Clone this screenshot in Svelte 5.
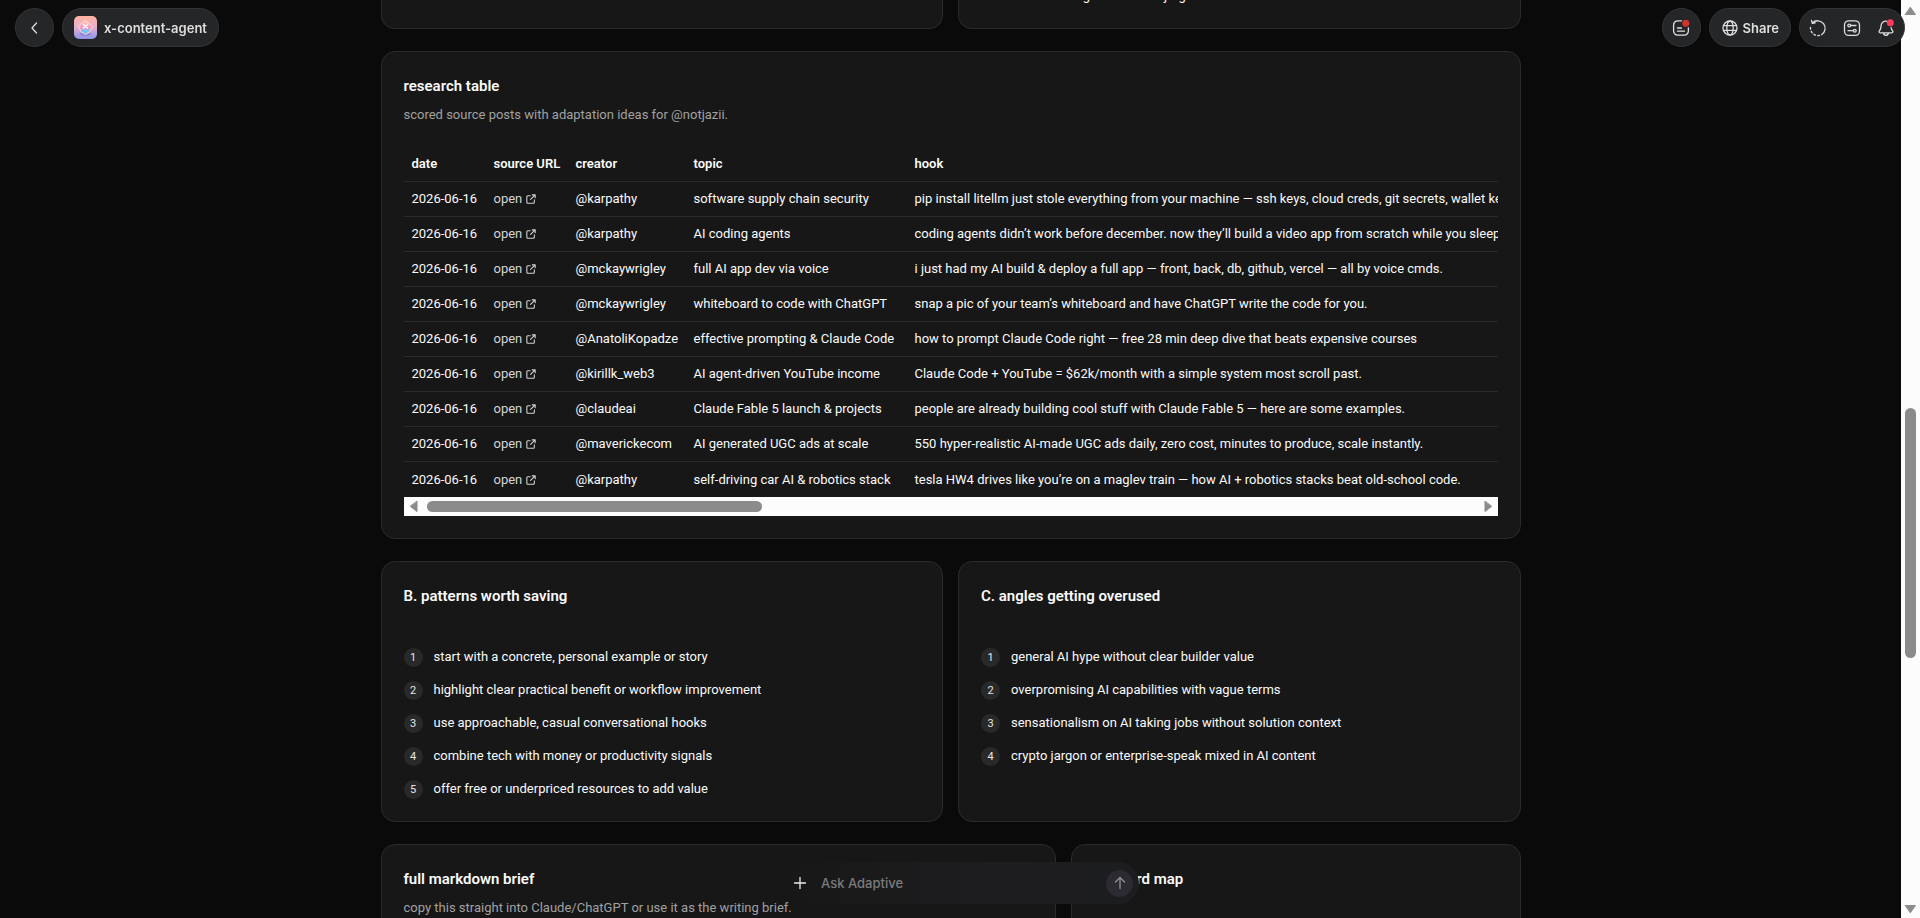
<script lang="ts">
   type Post = { creator: string; topic: string; hook: string };

   const date = "2026-06-16";
   const columns = ["date", "source URL", "creator", "topic", "hook"];

   const posts: Post[] = [
      {
         creator: "@karpathy",
         topic: "software supply chain security",
         hook: "pip install litellm just stole everything from your machine — ssh keys, cloud creds, git secrets, wallet keys.",
      },
      {
         creator: "@karpathy",
         topic: "AI coding agents",
         hook: "coding agents didn’t work before december. now they’ll build a video app from scratch while you sleep.",
      },
      {
         creator: "@mckaywrigley",
         topic: "full AI app dev via voice",
         hook: "i just had my AI build & deploy a full app — front, back, db, github, vercel — all by voice cmds.",
      },
      {
         creator: "@mckaywrigley",
         topic: "whiteboard to code with ChatGPT",
         hook: "snap a pic of your team’s whiteboard and have ChatGPT write the code for you.",
      },
      {
         creator: "@AnatoliKopadze",
         topic: "effective prompting & Claude Code",
         hook: "how to prompt Claude Code right — free 28 min deep dive that beats expensive courses",
      },
      {
         creator: "@kirillk_web3",
         topic: "AI agent-driven YouTube income",
         hook: "Claude Code + YouTube = $62k/month with a simple system most scroll past.",
      },
      {
         creator: "@claudeai",
         topic: "Claude Fable 5 launch & projects",
         hook: "people are already building cool stuff with Claude Fable 5 — here are some examples.",
      },
      {
         creator: "@maverickecom",
         topic: "AI generated UGC ads at scale",
         hook: "550 hyper-realistic AI-made UGC ads daily, zero cost, minutes to produce, scale instantly.",
      },
      {
         creator: "@karpathy",
         topic: "self-driving car AI & robotics stack",
         hook: "tesla HW4 drives like you’re on a maglev train — how AI + robotics stacks beat old-school code.",
      },
   ];

   const lists = [
      {
         title: "B. patterns worth saving",
         items: [
            "start with a concrete, personal example or story",
            "highlight clear practical benefit or workflow improvement",
            "use approachable, casual conversational hooks",
            "combine tech with money or productivity signals",
            "offer free or underpriced resources to add value",
         ],
      },
      {
         title: "C. angles getting overused",
         items: [
            "general AI hype without clear builder value",
            "overpromising AI capabilities with vague terms",
            "sensationalism on AI taking jobs without solution context",
            "crypto jargon or enterprise-speak mixed in AI content",
         ],
      },
   ];

   // share of the track before, under and after the thumb
   const pageBar = [441, 284, 275];
   const tableBar = [0, 32, 68];

   let message = "";
</script>

<div class="shell">
   <main>
      <div class="content">
         <div class="row halves">
            <section class="card tail"><div class="clip"></div></section>
            <section class="card tail">
               <div class="clip"><p>more building and far less jargon</p></div>
            </section>
         </div>

         <section class="card">
            <h2>research table</h2>
            <p class="sub">scored source posts with adaptation ideas for @notjazii.</p>
            <div class="scroller">
               <table>
                  <colgroup>
                     <col class="c-date" />
                     <col class="c-source" />
                     <col class="c-creator" />
                     <col class="c-topic" />
                     <col />
                  </colgroup>
                  <thead>
                     <tr>
                        {#each columns as column}
                           <th scope="col">{column}</th>
                        {/each}
                     </tr>
                  </thead>
                  <tbody>
                     {#each posts as post}
                        <tr>
                           <td>{date}</td>
                           <td>
                              <a href="#source">
                                 open
                                 <svg viewBox="0 0 12 12" width="10" height="10" aria-hidden="true">
                                    <path d="M7.5 1H11v3.5M11 1 5.5 6.5M5 2H2.2A1.2 1.2 0 0 0 1 3.2v6.6A1.2 1.2 0 0 0 2.200 11h6.600A1.2 1.2 0 0 0 10 9.800V7" />
                                 </svg>
                              </a>
                           </td>
                           <td>{post.creator}</td>
                           <td>{post.topic}</td>
                           <td>{post.hook}</td>
                        </tr>
                     {/each}
                  </tbody>
               </table>
            </div>
            <div class="bar horizontal">
               <svg viewBox="0 0 10 12" width="10" height="13"><path d="M8 1v10L1.500 6z" /></svg>
               <div class="track">
                  <span style="flex-grow: {tableBar[0]}"></span>
                  <span class="thumb" style="flex-grow: {tableBar[1]}"></span>
                  <span style="flex-grow: {tableBar[2]}"></span>
               </div>
               <svg viewBox="0 0 10 12" width="10" height="13"><path d="M2 1v10L8.500 6z" /></svg>
            </div>
         </section>

         <div class="row halves">
            {#each lists as list}
               <section class="card">
                  <h2>{list.title}</h2>
                  <ol>
                     {#each list.items as item, i}
                        <li><span class="num">{i + 1}</span>{item}</li>
                     {/each}
                  </ol>
               </section>
            {/each}
         </div>

         <div class="row wide-left">
            <section class="card last">
               <h2>full markdown brief</h2>
               <p class="sub">copy this straight into Claude/ChatGPT or use it as the writing brief.</p>
            </section>
            <section class="card last">
               <h2>keyword map</h2>
            </section>
         </div>
      </div>
   </main>

   <div class="bar vertical">
      <svg viewBox="0 0 12 10" width="13" height="10"><path d="M1 8.500h10L6 1.500z" /></svg>
      <div class="track">
         <span style="flex-grow: {pageBar[0]}"></span>
         <span class="thumb" style="flex-grow: {pageBar[1]}"></span>
         <span style="flex-grow: {pageBar[2]}"></span>
      </div>
      <svg viewBox="0 0 12 10" width="13" height="10"><path d="M1 1.500h10L6 8.500z" /></svg>
   </div>
</div>

<header>
   <div class="group">
      <button class="chip round" aria-label="Back">
         <svg viewBox="0 0 20 20" width="20" height="20"><path d="M11.500 5 7 10l4.500 5" /></svg>
      </button>
      <button class="chip project">
         <svg class="logo" viewBox="0 0 23 23" width="23" height="23" aria-hidden="true">
            <defs>
               <linearGradient id="sky" x1="0" y1="0" x2="0" y2="1">
                  <stop offset="0" stop-color="#ffb3a0" />
                  <stop offset="0.5" stop-color="#e5b0cf" />
                  <stop offset="1" stop-color="#8f96ea" />
               </linearGradient>
               <linearGradient id="gem" x1="0" y1="0" x2="0" y2="1">
                  <stop offset="0" stop-color="#ffc9b0" />
                  <stop offset="0.500" stop-color="#f79ac4" />
                  <stop offset="1" stop-color="#5fc4ff" />
               </linearGradient>
            </defs>
            <rect width="23" height="23" rx="5" fill="url(#sky)" />
            <ellipse cx="11.500" cy="18" rx="6" ry="2" fill="#7d78dc" opacity="0.6" />
            <path d="M11.500 4.500 18.500 10.500 16 15.500 11.500 18.500 7 15.500 4.500 10.500z" fill="url(#gem)" stroke="#ffdccb" stroke-width="1" stroke-linejoin="round" />
            <path d="M8 12.500q3.500 3.500 7 0l-1 3-2.500 2-2.500-2z" fill="#63cdfb" />
            <path d="M9.500 8.500l4 3.500M13.500 8.500l-4 3.500" stroke="#fff" stroke-width="1.500" stroke-linecap="round" />
         </svg>
         x-content-agent
      </button>
   </div>

   <div class="group">
      <button class="chip round" aria-label="Updates">
         <svg viewBox="0 0 20 20" width="20" height="20">
            <path d="M10.500 2.800H6.800A4.200 4.200 0 0 0 2.600 7v6a4.200 4.200 0 0 0 4.200 4.200h6.400a4.200 4.200 0 0 0 4.200-4.200V10M6.500 10h4M6.500 13.200h7" />
            <circle class="dot red" cx="14.800" cy="5.200" r="3.500" />
         </svg>
      </button>
      <button class="chip share">
         <svg viewBox="0 0 18 18" width="18" height="18" aria-hidden="true">
            <circle cx="9" cy="9" r="7" />
            <ellipse cx="9" cy="9" rx="3.200" ry="7" />
            <path d="M2.500 6.700h13M2.500 11.300h13" />
         </svg>
         Share
      </button>
      <div class="chip tools">
         <button aria-label="History">
            <svg viewBox="0 0 20 20" width="20" height="20">
               <path d="M4.300 5A7.500 7.500 0 1 1 13.500 16.700M3.500 2.500 4.300 5.400 7.200 4.800" />
               <path stroke-dasharray="1.800 2.200" d="M11.500 17.400A7.500 7.500 0 0 1 2.700 8.200" />
            </svg>
         </button>
         <button aria-label="Settings">
            <svg viewBox="0 0 20 20" width="20" height="20">
               <rect x="2.500" y="2.800" width="15" height="14.600" rx="4.200" />
               <path d="M8.800 7.500H14M6 12.700h5.200" />
               <circle cx="7.200" cy="7.500" r="1.400" />
               <circle cx="12.800" cy="12.700" r="1.400" />
            </svg>
         </button>
         <button aria-label="Notifications">
            <svg viewBox="0 0 20 20" width="20" height="20">
               <path d="M11 3.300C7.500 2.700 5 5 5 8.300c0 2.500-.6 3.400-1.500 4.400-.8 1-.5 2.100.8 2.100h11.400c1.300 0 1.600-1.100.8-2.100-.8-.9-1.200-1.800-1.400-3.200M7.500 15c.3 1.500 1.200 2.300 2.500 2.300s2.200-.8 2.500-2.300" />
               <circle class="dot pink" cx="14.300" cy="4.800" r="3.500" />
            </svg>
         </button>
      </div>
   </div>
</header>

<form class="ask" on:submit|preventDefault>
   <button type="button" class="plus" aria-label="Add attachment">
      <svg viewBox="0 0 14 14" width="14" height="14"><path d="M7 1.500v11M1.500 7h11" /></svg>
   </button>
   <input type="text" bind:value={message} placeholder="Ask Adaptive" aria-label="Ask Adaptive" />
   <button type="submit" class="send" aria-label="Send">
      <svg viewBox="0 0 14 14" width="14" height="14"><path d="M7 12.500v-11M2.500 6 7 1.500 11.500 6" /></svg>
   </button>
</form>

<style>
   :global(body) {
      background: #0a0a0a;
      overflow: hidden;
   }
   .shell {
      display: flex;
      height: 100vh;
      font-family: "Segoe UI", Roboto, sans-serif;
      font-size: 13px;
      line-height: 20px;
      color: #fafafa;
      background: #0a0a0a;
   }
   main {
      flex: 1;
      min-width: 0;
      overflow: hidden;
   }
   .content {
      max-width: 1140px;
      margin: 0 auto;
      display: flex;
      flex-direction: column;
      gap: 22px;
   }
   .row {
      display: grid;
      gap: 15px;
   }
   .halves {
      grid-template-columns: 1fr 1fr;
   }
   .wide-left {
      grid-template-columns: 3fr 2fr;
   }
   .card {
      min-width: 0;
      padding: 22px;
      background: #171717;
      border: 1px solid #2b2b2b;
      border-radius: 14px;
   }
   .tail {
      padding-top: 0;
      border-top: 0;
      border-radius: 0 0 14px 14px;
   }
   .clip {
      height: 6px;
      overflow: hidden;
      display: flex;
      align-items: flex-end;
      padding-left: 30px;
   }
   .last {
      min-height: 120px;
   }
   h2,
   p {
      margin: 0;
   }
   h2 {
      font-size: 15px;
      font-weight: 600;
      line-height: 25px;
   }
   .sub {
      margin-top: 6px;
      color: #a1a1a1;
   }

   .scroller {
      margin-top: 21px;
      overflow: hidden;
   }
   table {
      width: 3400px;
      table-layout: fixed;
      border-collapse: separate;
      border-spacing: 0;
      white-space: nowrap;
   }
   .c-date,
   .c-source {
      width: 82px;
   }
   .c-creator {
      width: 118px;
   }
   .c-topic {
      width: 221px;
   }
   th,
   td {
      box-sizing: border-box;
      height: 35px;
      padding: 0 0 0 8px;
      text-align: left;
      border-bottom: 1px solid #2b2b2b;
   }
   th {
      height: 36px;
      font-weight: 600;
   }
   tbody tr:last-child td {
      border-bottom: 0;
   }
   a {
      display: inline-flex;
      align-items: center;
      gap: 4px;
      color: #d4d4d4;
      text-decoration: none;
   }

   svg {
      display: block;
      flex: none;
      fill: none;
      stroke: currentColor;
      stroke-width: 1.3;
      stroke-linecap: round;
      stroke-linejoin: round;
   }
   .logo {
      stroke: none;
   }

   .bar {
      display: flex;
      align-items: center;
      background: #fcfcfc;
   }
   .bar svg {
      fill: #8b8b8b;
      stroke: #8b8b8b;
      stroke-width: 1;
   }
   .horizontal {
      height: 19px;
      padding: 0 5px;
      gap: 8px;
   }
   .vertical {
      flex-direction: column;
      width: 19px;
      box-sizing: border-box;
      padding: 6px 0 4px;
      gap: 4px;
   }
   .track {
      flex: 1;
      display: flex;
   }
   .vertical .track {
      flex-direction: column;
   }
   .track span {
      flex-basis: 0;
   }
   .thumb {
      min-width: 11px;
      min-height: 11px;
      border-radius: 6px;
      background: #8b8b8b;
   }

   ol {
      margin: 38px 0 0;
      padding: 0;
      list-style: none;
      display: flex;
      flex-direction: column;
      gap: 13px;
   }
   li {
      display: flex;
      align-items: center;
      gap: 11px;
      height: 20px;
   }
   .num {
      width: 19px;
      height: 19px;
      border-radius: 50%;
      background: #292929;
      color: #e5e5e5;
      font-size: 11px;
      line-height: 19px;
      text-align: center;
   }

   button,
   input {
      margin: 0;
      padding: 0;
      border: 0;
      background: none;
      color: inherit;
      font: inherit;
   }
   button {
      display: flex;
      align-items: center;
      justify-content: center;
      cursor: pointer;
   }
   header {
      position: fixed;
      top: 8px;
      left: 15px;
      right: 15px;
      display: flex;
      justify-content: space-between;
      font-family: Inter, sans-serif;
      font-size: 13px;
      font-weight: 600;
      line-height: 20px;
      color: #dedede;
   }
   .group {
      display: flex;
      gap: 8px;
   }
   .chip {
      box-sizing: border-box;
      height: 39px;
      border: 1px solid #333538;
      border-radius: 20px;
      background: #242628;
   }
   .round {
      width: 39px;
   }
   .project {
      gap: 7px;
      padding: 0 11px;
   }
   .share {
      gap: 4px;
      padding: 0 11px;
   }
   .tools {
      display: flex;
      align-items: center;
      gap: 14px;
      padding: 0 8px;
   }
   .dot {
      stroke: none;
   }
   .red {
      fill: #d0342c;
   }
   .pink {
      fill: #ff3b5c;
   }

   .ask {
      position: fixed;
      bottom: 14px;
      left: 50%;
      transform: translateX(-50%);
      box-sizing: border-box;
      width: 358px;
      height: 42px;
      padding: 0 6px 0 9px;
      display: flex;
      align-items: center;
      gap: 11px;
      border-radius: 21px;
      background: linear-gradient(90deg, #171718, #1e1e20 60%, #1c1d1f);
      font-family: Inter, sans-serif;
      font-size: 13px;
      font-weight: 500;
      line-height: 20px;
      color: #ececec;
   }
   .plus {
      width: 20px;
      height: 20px;
   }
   .ask input {
      flex: 1;
      min-width: 0;
      outline: none;
   }
   .ask input::placeholder {
      color: #7b7b7b;
      opacity: 1;
   }
   .send {
      width: 27px;
      height: 27px;
      border-radius: 50%;
      background: #2b2b31;
      color: #8f8f93;
   }
</style>
